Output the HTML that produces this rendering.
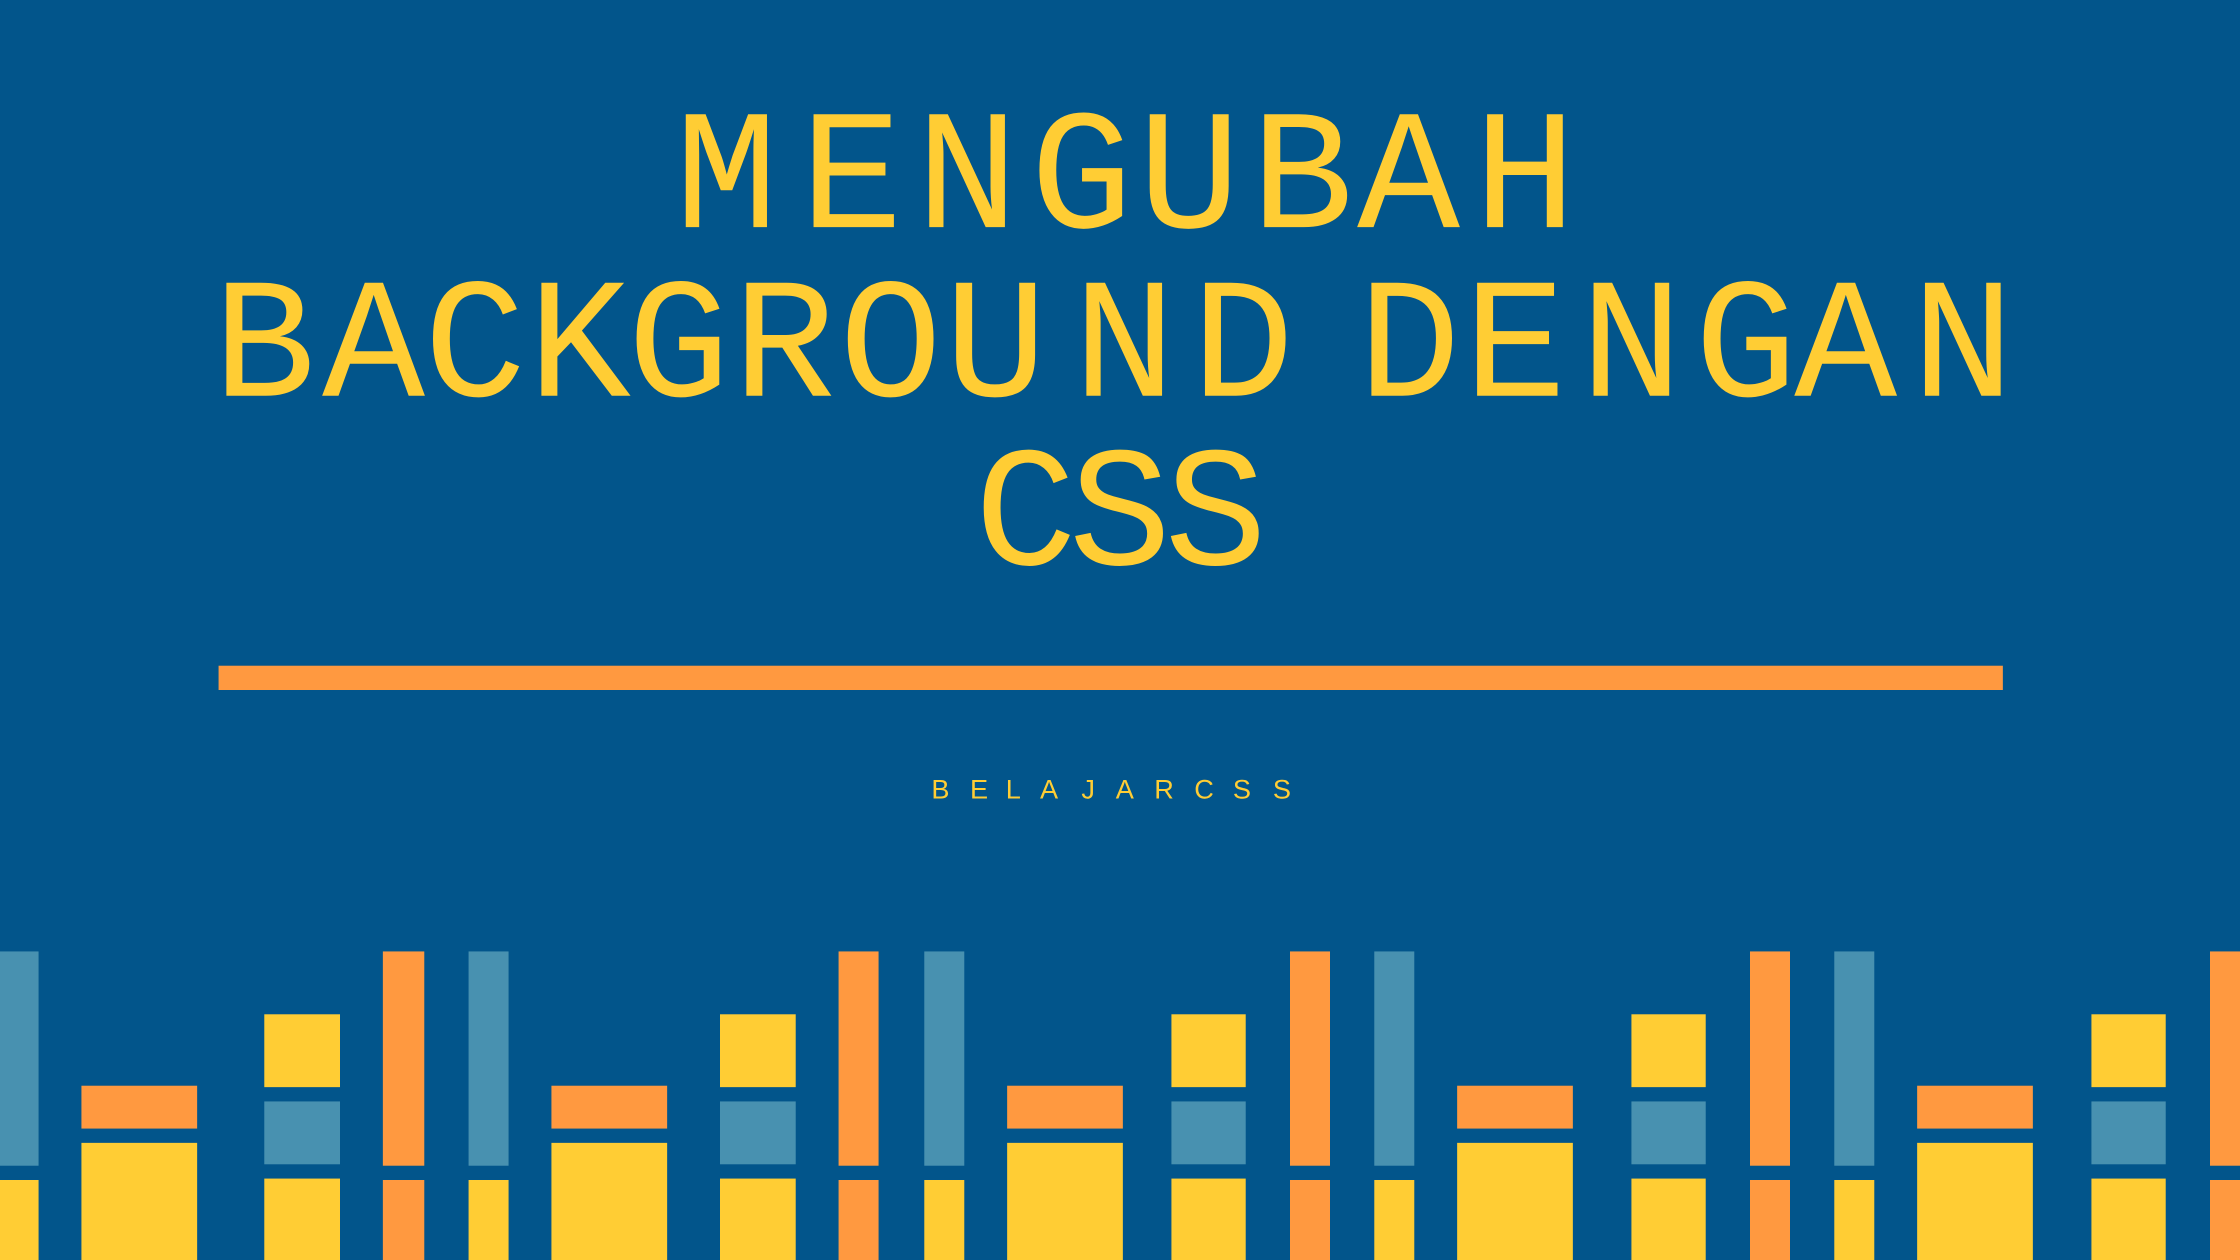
<!DOCTYPE html>
<html><head><meta charset="utf-8"><style>
html,body{margin:0;padding:0;width:2240px;height:1260px;overflow:hidden;background:#02558b;}
#s{position:absolute;left:0;top:0;width:1568px;height:882px;transform:scale(1.4285714);transform-origin:0 0;background:#02558b;overflow:hidden;}
.l{position:absolute;font-family:"Liberation Mono",monospace;font-size:120px;line-height:120px;color:#ffcd34;width:100px;margin-left:-50px;text-align:center;}
.b{position:absolute;font-family:"Liberation Sans",sans-serif;font-size:19px;line-height:19px;color:#ffcd34;top:544px;}
.r{position:absolute;}
.Y{background:#ffcd34}.O{background:#ff9940}.B{background:#4891b0}
</style></head><body><div id="s">
<div class="l" style="top:68px;left:508.5px">M</div>
<div class="l" style="top:68px;left:596px">E</div>
<div class="l" style="top:68px;left:677px">N</div>
<div class="l" style="top:68px;left:757px">G</div>
<div class="l" style="top:68px;left:832.5px">U</div>
<div class="l" style="top:68px;left:911.5px">B</div>
<div class="l" style="top:68px;left:986px">A</div>
<div class="l" style="top:68px;left:1067.5px">H</div>

<div class="l" style="top:186px;left:185px">B</div>
<div class="l" style="top:186px;left:261.5px">A</div>
<div class="l" style="top:186px;left:332.5px">C</div>
<div class="l" style="top:186px;left:405.5px">K</div>
<div class="l" style="top:186px;left:475px">G</div>
<div class="l" style="top:186px;left:549px">R</div>
<div class="l" style="top:186px;left:623.5px">O</div>
<div class="l" style="top:186px;left:697px">U</div>
<div class="l" style="top:186px;left:787px">N</div>
<div class="l" style="top:186px;left:870px">D</div>
<div class="l" style="top:186px;left:986.5px">D</div>
<div class="l" style="top:186px;left:1060.5px">E</div>
<div class="l" style="top:186px;left:1142px">N</div>
<div class="l" style="top:186px;left:1222px">G</div>
<div class="l" style="top:186px;left:1292px">A</div>
<div class="l" style="top:186px;left:1374px">N</div>

<div class="l" style="top:304px;left:718px">C</div>
<div class="l" style="top:304px;left:784px">S</div>
<div class="l" style="top:304px;left:851px">S</div>

<div class="r O" style="left:153px;top:466px;width:1249px;height:17px"></div>

<div class="b" style="left:652px">B</div>
<div class="b" style="left:679px">E</div>
<div class="b" style="left:704px">L</div>
<div class="b" style="left:728px">A</div>
<div class="b" style="left:757px">J</div>
<div class="b" style="left:781px">A</div>
<div class="b" style="left:808px">R</div>
<div class="b" style="left:836px">C</div>
<div class="b" style="left:863px">S</div>
<div class="b" style="left:891px">S</div>

<div class="r B" style="left:0;top:666px;width:27px;height:150px"></div>
<div class="r Y" style="left:0;top:826px;width:27px;height:56px"></div>

<div class="r O" style="left:57px;top:760px;width:81px;height:30px"></div>
<div class="r Y" style="left:57px;top:800px;width:81px;height:82px"></div>
<div class="r Y" style="left:185px;top:710px;width:53px;height:51px"></div>
<div class="r B" style="left:185px;top:771px;width:53px;height:44px"></div>
<div class="r Y" style="left:185px;top:825px;width:53px;height:57px"></div>
<div class="r O" style="left:268px;top:666px;width:29px;height:150px"></div>
<div class="r O" style="left:268px;top:826px;width:29px;height:56px"></div>
<div class="r B" style="left:328px;top:666px;width:28px;height:150px"></div>
<div class="r Y" style="left:328px;top:826px;width:28px;height:56px"></div>

<div class="r O" style="left:386px;top:760px;width:81px;height:30px"></div>
<div class="r Y" style="left:386px;top:800px;width:81px;height:82px"></div>
<div class="r Y" style="left:504px;top:710px;width:53px;height:51px"></div>
<div class="r B" style="left:504px;top:771px;width:53px;height:44px"></div>
<div class="r Y" style="left:504px;top:825px;width:53px;height:57px"></div>
<div class="r O" style="left:587px;top:666px;width:28px;height:150px"></div>
<div class="r O" style="left:587px;top:826px;width:28px;height:56px"></div>
<div class="r B" style="left:647px;top:666px;width:28px;height:150px"></div>
<div class="r Y" style="left:647px;top:826px;width:28px;height:56px"></div>

<div class="r O" style="left:705px;top:760px;width:81px;height:30px"></div>
<div class="r Y" style="left:705px;top:800px;width:81px;height:82px"></div>
<div class="r Y" style="left:820px;top:710px;width:52px;height:51px"></div>
<div class="r B" style="left:820px;top:771px;width:52px;height:44px"></div>
<div class="r Y" style="left:820px;top:825px;width:52px;height:57px"></div>
<div class="r O" style="left:903px;top:666px;width:28px;height:150px"></div>
<div class="r O" style="left:903px;top:826px;width:28px;height:56px"></div>
<div class="r B" style="left:962px;top:666px;width:28px;height:150px"></div>
<div class="r Y" style="left:962px;top:826px;width:28px;height:56px"></div>

<div class="r O" style="left:1020px;top:760px;width:81px;height:30px"></div>
<div class="r Y" style="left:1020px;top:800px;width:81px;height:82px"></div>
<div class="r Y" style="left:1142px;top:710px;width:52px;height:51px"></div>
<div class="r B" style="left:1142px;top:771px;width:52px;height:44px"></div>
<div class="r Y" style="left:1142px;top:825px;width:52px;height:57px"></div>
<div class="r O" style="left:1225px;top:666px;width:28px;height:150px"></div>
<div class="r O" style="left:1225px;top:826px;width:28px;height:56px"></div>
<div class="r B" style="left:1284px;top:666px;width:28px;height:150px"></div>
<div class="r Y" style="left:1284px;top:826px;width:28px;height:56px"></div>

<div class="r O" style="left:1342px;top:760px;width:81px;height:30px"></div>
<div class="r Y" style="left:1342px;top:800px;width:81px;height:82px"></div>
<div class="r Y" style="left:1464px;top:710px;width:52px;height:51px"></div>
<div class="r B" style="left:1464px;top:771px;width:52px;height:44px"></div>
<div class="r Y" style="left:1464px;top:825px;width:52px;height:57px"></div>
<div class="r O" style="left:1547px;top:666px;width:28px;height:150px"></div>
<div class="r O" style="left:1547px;top:826px;width:28px;height:56px"></div>
</div></body></html>
